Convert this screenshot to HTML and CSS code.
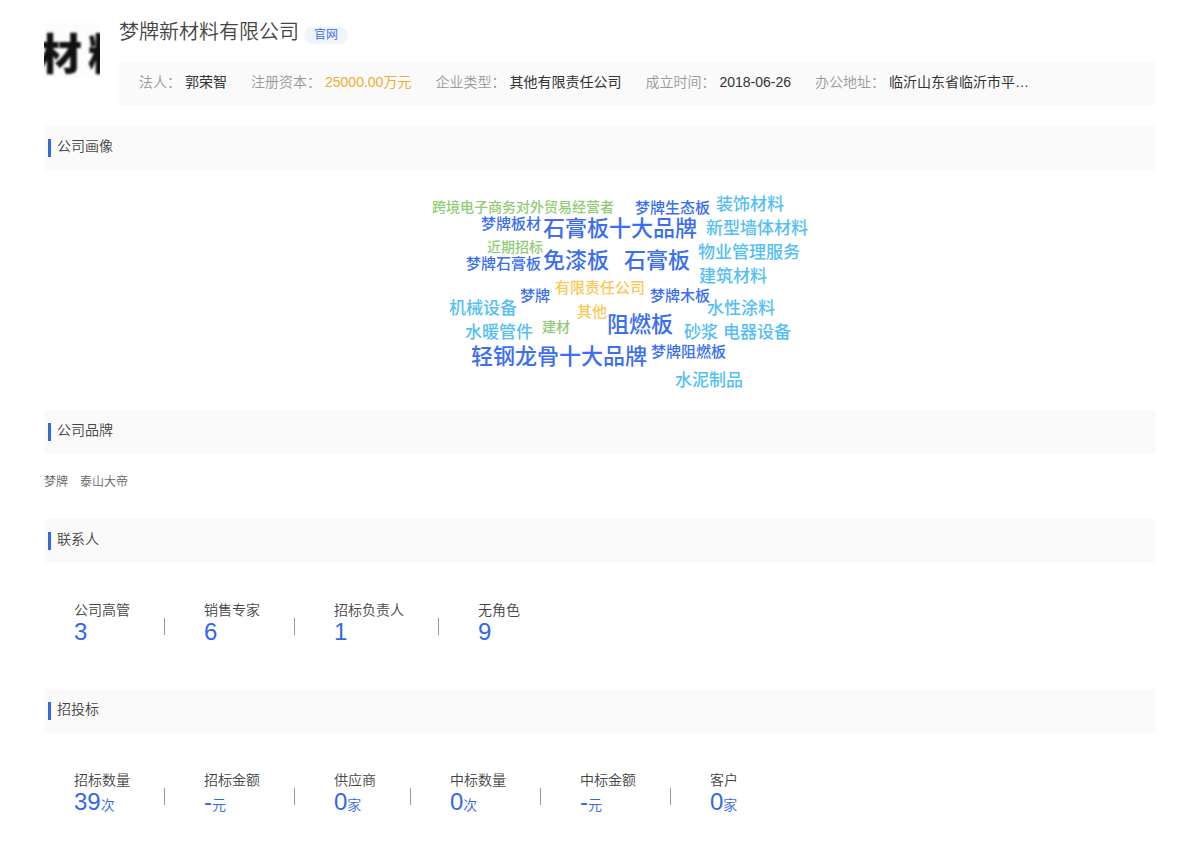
FILE: index.html
```html
<!DOCTYPE html>
<html lang="zh-CN">
<head>
<meta charset="utf-8">
<meta name="viewport" content="width=device-width, initial-scale=1">
<title>梦牌新材料有限公司</title>
<link rel="stylesheet" href="styles.css">
</head>
<body>
<main class="page">
  <header class="company">
    <div class="logo" role="img" aria-label="梦牌新材料"><span class="logo-text">材</span><span class="logo-text">料</span></div>
    <div class="company-main">
      <div class="company-title">
        <h1 class="company-name">梦牌新材料有限公司</h1>
        <a class="site-link" href="#">官网</a>
      </div>
      <dl class="facts">
        <div class="fact"><dt>法人：</dt><dd>郭荣智</dd></div>
        <div class="fact"><dt>注册资本：</dt><dd class="money">25000.00万元</dd></div>
        <div class="fact"><dt>企业类型：</dt><dd>其他有限责任公司</dd></div>
        <div class="fact"><dt>成立时间：</dt><dd>2018-06-26</dd></div>
        <div class="fact"><dt>办公地址：</dt><dd>临沂山东省临沂市平…</dd></div>
      </dl>
    </div>
  </header>

  <section>
    <h2 class="section-title">公司画像</h2>
    <div class="cloud">
      <span class="word green" style="left:42px;top:29px">跨境电子商务对外贸易经营者</span>
      <span class="word blue" style="left:245px;top:29px">梦牌生态板</span>
      <span class="word sky" style="left:326px;top:24px">装饰材料</span>
      <span class="word blue" style="left:91px;top:45px">梦牌板材</span>
      <span class="word big" style="left:153px;top:45px">石膏板十大品牌</span>
      <span class="word sky" style="left:316px;top:48px">新型墙体材料</span>
      <span class="word green" style="left:97px;top:69px">近期招标</span>
      <span class="word sky" style="left:308px;top:72px">物业管理服务</span>
      <span class="word blue" style="left:76px;top:85px">梦牌石膏板</span>
      <span class="word big" style="left:153px;top:77px">免漆板</span>
      <span class="word big" style="left:234px;top:77px">石膏板</span>
      <span class="word sky" style="left:309px;top:96px">建筑材料</span>
      <span class="word blue" style="left:130px;top:117px">梦牌</span>
      <span class="word gold" style="left:165px;top:109px">有限责任公司</span>
      <span class="word blue" style="left:260px;top:117px">梦牌木板</span>
      <span class="word sky" style="left:59px;top:128px">机械设备</span>
      <span class="word gold" style="left:187px;top:133px">其他</span>
      <span class="word sky" style="left:317px;top:128px">水性涂料</span>
      <span class="word sky" style="left:75px;top:152px">水暖管件</span>
      <span class="word green" style="left:152px;top:149px">建材</span>
      <span class="word big" style="left:217px;top:141px">阻燃板</span>
      <span class="word sky" style="left:294px;top:152px">砂浆</span>
      <span class="word sky" style="left:333px;top:152px">电器设备</span>
      <span class="word big" style="left:81px;top:173px">轻钢龙骨十大品牌</span>
      <span class="word blue" style="left:261px;top:173px">梦牌阻燃板</span>
      <span class="word sky" style="left:285px;top:200px">水泥制品</span>
    </div>
  </section>

  <section>
    <h2 class="section-title">公司品牌</h2>
    <ul class="brands"><li>梦牌</li><li>泰山大帝</li></ul>
  </section>

  <section>
    <h2 class="section-title">联系人</h2>
    <dl class="stats">
      <div class="stat"><dt>公司高管</dt><dd>3</dd></div>
      <div class="stat"><dt>销售专家</dt><dd>6</dd></div>
      <div class="stat"><dt>招标负责人</dt><dd>1</dd></div>
      <div class="stat"><dt>无角色</dt><dd>9</dd></div>
    </dl>
  </section>

  <section>
    <h2 class="section-title">招投标</h2>
    <dl class="stats">
      <div class="stat"><dt>招标数量</dt><dd>39<small>次</small></dd></div>
      <div class="stat"><dt>招标金额</dt><dd>-<small>元</small></dd></div>
      <div class="stat"><dt>供应商</dt><dd>0<small>家</small></dd></div>
      <div class="stat"><dt>中标数量</dt><dd>0<small>次</small></dd></div>
      <div class="stat"><dt>中标金额</dt><dd>-<small>元</small></dd></div>
      <div class="stat"><dt>客户</dt><dd>0<small>家</small></dd></div>
    </dl>
  </section>
</main>
</body>
</html>
```
FILE: styles.css
```css
* { box-sizing: border-box; }
body {
  margin: 0;
  background: #fff;
  color: #444;
  font-family: "Liberation Sans", "Noto Sans CJK SC", sans-serif;
  font-size: 14px;
  font-weight: 350;
  line-height: 20px;
}
h1, h2, dl, dd, ul { margin: 0; padding: 0; font-weight: 350; }
.page { padding: 20px 44px; }

.company { display: flex; gap: 19px; margin-bottom: 21px; }
.logo {
  display: flex;
  gap: 6px;
  flex: none;
  width: 56px;
  height: 56px;
  margin-top: 2px;
  padding-top: 8px;
  overflow: hidden;
  background: #fcfcfc;
}
.logo-text {
  flex: none;
  margin-left: -5px;
  color: #111;
  font: 900 43px/43px "Noto Sans CJK SC", sans-serif;
  filter: blur(1px);
}
.logo-text + .logo-text { margin-left: 0; }
.company-main { flex: 1; min-width: 0; }
.company-title { display: flex; align-items: flex-end; gap: 5px; height: 24px; }
.company-name { font-size: 20px; line-height: 24px; }
.site-link {
  padding: 0 10px;
  border-radius: 9px;
  background: #f0f4fd;
  color: #3468e8;
  font-size: 12px;
  line-height: 17px;
  text-decoration: none;
}
.facts {
  display: flex;
  flex-wrap: wrap;
  gap: 0 24px;
  margin-top: 18px;
  padding: 10px 20px 13px;
  background: #fafafa;
}
.fact { display: flex; gap: 4px; }
.fact dt { color: #999; }
.fact dd { color: #333; font-weight: 400; }
.fact .money { color: #f0ae35; }

.section-title {
  display: flex;
  gap: 6px;
  padding: 10px 4px;
  background: #fafafa;
  font-size: 14px;
  line-height: 20px;
  height: 44px;
}
.section-title::before {
  content: "";
  width: 3px;
  height: 18px;
  margin-top: 3px;
  background: #3468e0;
}

.cloud {
  position: relative;
  width: 420px;
  height: 240px;
  margin: 0 auto;
  font-family: "Noto Sans CJK SC", sans-serif;
  font-weight: 500;
}
.word { position: absolute; white-space: nowrap; line-height: 1; }
.green { color: #91cc75; font-size: 14px; }
.blue { color: #3b6ef0; font-size: 15px; }
.big { color: #3b6ef0; font-size: 22px; }
.sky { color: #55bff5; font-size: 17px; }
.gold { color: #fac858; font-size: 15px; }

.brands {
  display: flex;
  gap: 12px;
  padding: 18px 0 27px;
  color: #666;
  font-size: 12px;
  list-style: none;
}

.stats { display: flex; padding: 37px 30px 46px; }
.stat { display: flex; flex-direction: column; position: relative; }
.stat:not(:last-child) { margin-right: 74px; }
.stat:not(:last-child)::after {
  content: "";
  position: absolute;
  right: -35px;
  top: 18px;
  width: 1px;
  height: 17px;
  background: #999;
}
.stat dt { line-height: 20px; }
.stat dd { color: #3468e8; font-size: 24px; line-height: 23px; }
.stat small { font-size: 14px; }
```
